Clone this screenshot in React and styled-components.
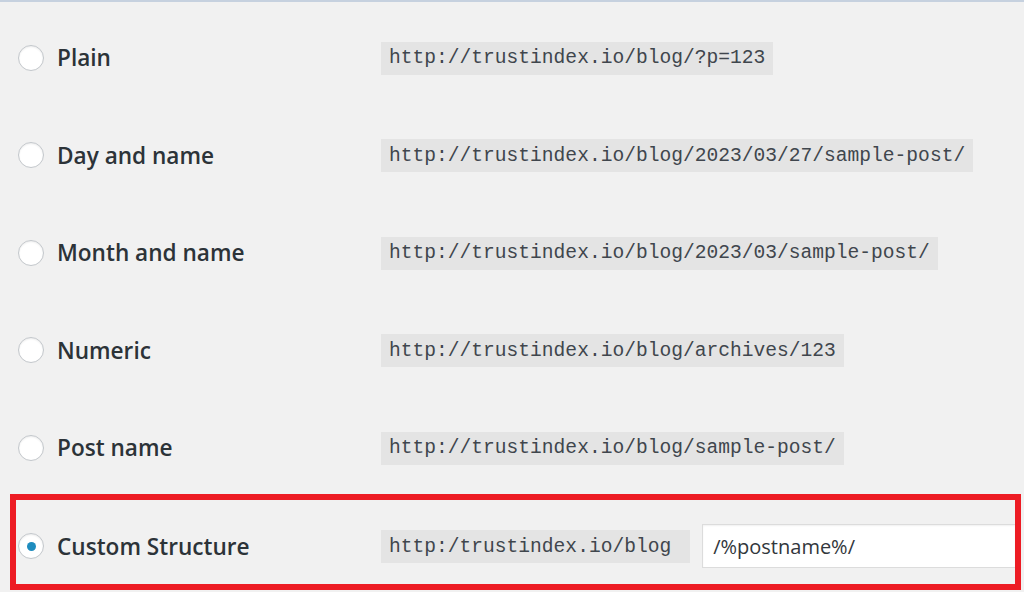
import React from "react";
import styled, { createGlobalStyle } from "styled-components";

const GlobalStyles = createGlobalStyle`
  html, body {
    margin: 0;
    padding: 0;
    background: #f1f1f1;
    width: 1024px;
    height: 592px;
    overflow: hidden;
  }
`;

const options = [
  { label: "Plain", url: "http://trustindex.io/blog/?p=123" },
  { label: "Day and name", url: "http://trustindex.io/blog/2023/03/27/sample-post/" },
  { label: "Month and name", url: "http://trustindex.io/blog/2023/03/sample-post/" },
  { label: "Numeric", url: "http://trustindex.io/blog/archives/123" },
  { label: "Post name", url: "http://trustindex.io/blog/sample-post/" },
];

const Page = styled.div`
  width: 1024px;
  height: 592px;
  box-sizing: border-box;
  border-top: 2px solid #c6d1df;
  padding-top: 7px;
  font-family: "Open Sans", "Noto Sans", sans-serif;
`;

const Row = styled.label`
  display: flex;
  align-items: center;
  height: ${(p) => (p.$custom ? "76px" : "97.5px")};
  padding-left: ${(p) => (p.$custom ? "2px" : "18px")};
`;

const Radio = styled.span`
  flex: none;
  width: 26px;
  height: 26px;
  box-sizing: border-box;
  border-radius: 50%;
  border: 1px solid #c3c7cb;
  background: #fff;
  box-shadow: inset 0 1px 2px rgba(0, 0, 0, 0.08);
  display: flex;
  align-items: center;
  justify-content: center;

  &::after {
    content: "";
    display: ${(p) => (p.$checked ? "block" : "none")};
    width: 9px;
    height: 9px;
    border-radius: 50%;
    background: #1e8cbe;
  }
`;

const Label = styled.span`
  width: 324px;
  padding-left: 13px;
  font-size: 22.6px;
  font-weight: 600;
  color: #2c3338;
`;

const Code = styled.code`
  display: inline-flex;
  align-items: center;
  height: 33px;
  padding: ${(p) => (p.$custom ? "0 19px 0 8px" : "0 8px")};
  margin-top: 1px;
  background: #e4e4e4;
  color: #40464d;
  font-family: "Liberation Mono", "DejaVu Sans Mono", monospace;
  font-size: 19.6px;
  white-space: nowrap;
`;

const Highlight = styled.div`
  margin: -2.5px 0 0 10px;
  width: 1011px;
  height: 96px;
  box-sizing: border-box;
  border: 6px solid #ed1c24;
  padding-top: 8px;
  overflow: hidden;
`;

const Field = styled.input`
  flex: 1;
  min-width: 0;
  height: 44px;
  margin-left: 12px;
  box-sizing: border-box;
  border: 1px solid #dcdcdc;
  border-right: none;
  background: #fff;
  box-shadow: inset 0 1px 2px rgba(0, 0, 0, 0.06);
  padding: 0 10px;
  font-family: "Open Sans", "Noto Sans", sans-serif;
  font-size: 20px;
  color: #32373c;
  outline: none;
`;

export default function App() {
  return (
    <>
      <GlobalStyles />
      <Page>
        {options.map((o) => (
          <Row key={o.label}>
            <Radio />
            <Label>{o.label}</Label>
            <Code>{o.url}</Code>
          </Row>
        ))}
        <Highlight>
          <Row $custom>
            <Radio $checked />
            <Label>Custom Structure</Label>
            <Code $custom>http:/trustindex.io/blog</Code>
            <Field defaultValue="/%postname%/" readOnly />
          </Row>
        </Highlight>
      </Page>
    </>
  );
}
